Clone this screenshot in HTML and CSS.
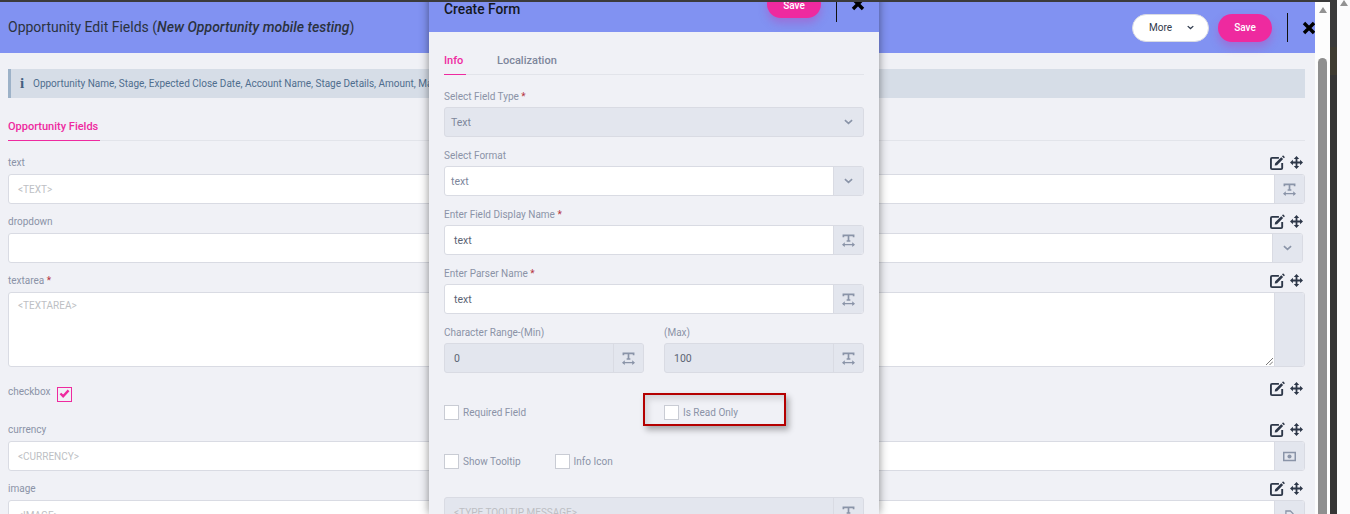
FILE: index.html
```html
<!DOCTYPE html>
<html lang="en">
<head>
    <meta charset="UTF-8">
    <title>Opportunity Edit Fields</title>
    <link rel="stylesheet" href="styles.css">
</head>
<body>
<svg class="defs" width="0" height="0">
    <symbol id="i-edit" viewBox="0 0 16 16">
        <path d="M9.500 3H2.200C1.500 3 1 3.500 1 4.200v9.600c0 .7.500 1.200 1.200 1.200h9.600c.7 0 1.200-.5 1.200-1.200V8.500" fill="none" stroke="currentColor" stroke-width="2"/>
        <path d="M5.500 8.800 12 2.300l2 2-6.500 6.500-2.500.5zM12.800 1.500l.7-.7c.3-.3.7-.3 1 0l1 1c.3.3.3.7 0 1l-.7.7z" fill="currentColor"/>
    </symbol>
    <symbol id="i-move" viewBox="0 0 16 16">
        <path d="M8 0 11.300 3.600H9.100V6.900H12.400V4.700L16 8l-3.600 3.300V9.100H9.100V12.400H11.300L8 16l-3.300-3.600H6.900V9.100H3.600V11.300L0 8l3.600-3.300V6.900H6.900V3.600H4.700z" fill="currentColor"/>
    </symbol>
    <symbol id="i-width" viewBox="0 0 14 14">
        <path d="M1.500 3.500V1.500h11v2M7 1.500V7.500M5 7.500h4" fill="none" stroke="currentColor" stroke-width="1.800"/>
        <path d="M1 11.500h12" stroke="currentColor" stroke-width="1.200"/>
        <path d="M0 11.500 3 9v5zM14 11.500 11 9v5z" fill="currentColor"/>
    </symbol>
    <symbol id="i-chevron" viewBox="0 0 10 6">
        <path d="M1 1l4 3.500L9 1" fill="none" stroke="currentColor" stroke-width="1.800"/>
    </symbol>
    <symbol id="i-money" viewBox="0 0 14 10">
        <path d="M.8.800h12.400v8.400H.8z" fill="none" stroke="currentColor" stroke-width="1.600"/>
        <circle cx="7" cy="5" r="2.200" fill="currentColor"/>
    </symbol>
    <symbol id="i-file" viewBox="0 0 10 12">
        <path d="M1 1h5l3 3v7H1z" fill="none" stroke="currentColor" stroke-width="1.400"/>
        <path d="M3 6h4v3H3z" fill="currentColor"/>
    </symbol>
    <symbol id="i-times" viewBox="0 0 14 14">
        <path d="M2 2l10 10M12 2 2 12" fill="none" stroke="currentColor" stroke-width="3.400"/>
    </symbol>
</svg>

<div class="screen">
    <div class="app">
        <div class="topBar"></div>
        <div class="appBody">
            <div class="panel">
                <div class="head">
                    <div class="headTitle">Opportunity Edit Fields (<em>New Opportunity mobile testing</em>)</div>
                    <div class="headBtns">
                        <a class="btnMore" href="javascript:;">More <svg class="moreArrow"><use href="#i-chevron"/></svg></a>
                        <a class="btnSave" href="javascript:;">Save</a>
                        <span class="sep"></span>
                        <svg class="closeIcon"><use href="#i-times"/></svg>
                    </div>
                </div>
                <div class="panelBody">
                    <div class="alert">
                        <span class="alertIcon">i</span>
                        <span>Opportunity Name, Stage, Expected Close Date, Account Name, Stage Details, Amount, Mandatory</span>
                    </div>
                    <div class="tabs">
                        <a class="tab on" href="javascript:;">Opportunity Fields</a>
                    </div>

                    <div class="field">
                        <div class="fieldHead">
                            <span class="label">text</span>
                            <span class="tools"><svg class="tool"><use href="#i-edit"/></svg><svg class="toolMove"><use href="#i-move"/></svg></span>
                        </div>
                        <div class="control">
                            <div class="ctrlText ph">&lt;TEXT&gt;</div>
                            <div class="addon"><svg class="addonIcon"><use href="#i-width"/></svg></div>
                        </div>
                    </div>
                    <div class="field">
                        <div class="fieldHead">
                            <span class="label">dropdown</span>
                            <span class="tools"><svg class="tool"><use href="#i-edit"/></svg><svg class="toolMove"><use href="#i-move"/></svg></span>
                        </div>
                        <div class="control short">
                            <div class="ctrlText"></div>
                            <div class="addon"><svg class="chevron"><use href="#i-chevron"/></svg></div>
                        </div>
                    </div>
                    <div class="field">
                        <div class="fieldHead">
                            <span class="label">textarea <b class="req">*</b></span>
                            <span class="tools"><svg class="tool"><use href="#i-edit"/></svg><svg class="toolMove"><use href="#i-move"/></svg></span>
                        </div>
                        <div class="control tall">
                            <div class="ctrlText ph">&lt;TEXTAREA&gt;
                                <svg class="grip" viewBox="0 0 8 8"><path d="M0 8 8 0M4 8l4-4" stroke="#666" stroke-width="1"/></svg>
                            </div>
                            <div class="addon"></div>
                        </div>
                    </div>
                    <div class="field checkField">
                        <span class="label">checkbox</span>
                        <span class="checkOn"><svg viewBox="0 0 12 10"><path d="M1.500 5 4.500 8 10.500 1.500" fill="none" stroke="#ee2a9f" stroke-width="2.600"/></svg></span>
                        <span class="tools"><svg class="tool"><use href="#i-edit"/></svg><svg class="toolMove"><use href="#i-move"/></svg></span>
                    </div>
                    <div class="field">
                        <div class="fieldHead">
                            <span class="label">currency</span>
                            <span class="tools"><svg class="tool"><use href="#i-edit"/></svg><svg class="toolMove"><use href="#i-move"/></svg></span>
                        </div>
                        <div class="control">
                            <div class="ctrlText ph">&lt;CURRENCY&gt;</div>
                            <div class="addon"><svg class="addonIcon"><use href="#i-money"/></svg></div>
                        </div>
                    </div>
                    <div class="field">
                        <div class="fieldHead">
                            <span class="label">image</span>
                            <span class="tools"><svg class="tool"><use href="#i-edit"/></svg><svg class="toolMove"><use href="#i-move"/></svg></span>
                        </div>
                        <div class="control">
                            <div class="ctrlText ph">&lt;IMAGE&gt;</div>
                            <div class="addon"><svg class="fileIcon"><use href="#i-file"/></svg></div>
                        </div>
                    </div>
                </div>
            </div>
            <div class="innerScroll">
                <span class="arrowUp"></span>
                <span class="thumb"></span>
            </div>

            <div class="modal">
                <div class="head modalHead">
                    <div class="modalTitle">Create Form</div>
                    <div class="headBtns">
                        <a class="btnSave" href="javascript:;">Save</a>
                        <span class="sep"></span>
                        <svg class="closeIcon"><use href="#i-times"/></svg>
                    </div>
                </div>
                <div class="modalBody">
                    <div class="tabs modalTabs">
                        <a class="tab on" href="javascript:;">Info</a>
                        <a class="tab" href="javascript:;">Localization</a>
                    </div>
                    <div class="field">
                        <div class="fieldHead"><span class="label">Select Field Type <b class="req">*</b></span></div>
                        <div class="control off">
                            <div class="ctrlText">Text</div>
                            <div class="addon plain"><svg class="chevron"><use href="#i-chevron"/></svg></div>
                        </div>
                    </div>
                    <div class="field">
                        <div class="fieldHead"><span class="label">Select Format</span></div>
                        <div class="control">
                            <div class="ctrlText sel">text</div>
                            <div class="addon"><svg class="chevron"><use href="#i-chevron"/></svg></div>
                        </div>
                    </div>
                    <div class="field">
                        <div class="fieldHead"><span class="label">Enter Field Display Name <b class="req">*</b></span></div>
                        <div class="control">
                            <div class="ctrlText dark">text</div>
                            <div class="addon"><svg class="addonIcon"><use href="#i-width"/></svg></div>
                        </div>
                    </div>
                    <div class="field">
                        <div class="fieldHead"><span class="label">Enter Parser Name <b class="req">*</b></span></div>
                        <div class="control">
                            <div class="ctrlText dark">text</div>
                            <div class="addon"><svg class="addonIcon"><use href="#i-width"/></svg></div>
                        </div>
                    </div>
                    <div class="twoCol">
                        <div class="field">
                            <div class="fieldHead"><span class="label">Character Range-(Min)</span></div>
                            <div class="control off">
                                <div class="ctrlText dark">0</div>
                                <div class="addon"><svg class="addonIcon"><use href="#i-width"/></svg></div>
                            </div>
                        </div>
                        <div class="field">
                            <div class="fieldHead"><span class="label">(Max)</span></div>
                            <div class="control off">
                                <div class="ctrlText dark">100</div>
                                <div class="addon"><svg class="addonIcon"><use href="#i-width"/></svg></div>
                            </div>
                        </div>
                    </div>
                    <div class="checkRow twoCol">
                        <label class="check"><span class="box"></span>Required Field</label>
                        <label class="check marked"><span class="box"></span>Is Read Only</label>
                    </div>
                    <div class="checkRow">
                        <label class="check wide"><span class="box"></span>Show Tooltip</label>
                        <label class="check"><span class="box"></span>Info Icon</label>
                    </div>
                    <div class="control off tipInput">
                        <div class="ctrlText ph dark">&lt;TYPE TOOLTIP MESSAGE&gt;</div>
                        <div class="addon"><svg class="addonIcon"><use href="#i-width"/></svg></div>
                    </div>
                </div>
            </div>
        </div>
    </div>
    <div class="gutter"></div>
    <div class="outerScroll"><span class="arrowUp"></span></div>
</div>
</body>
</html>
```

FILE: styles.css
```css
* {
    margin: 0;
    padding: 0;
    box-sizing: border-box;
}

html, body {
    height: 100%;
    overflow: hidden;
}

body {
    font-size: 10px;
    font-family: "Roboto", "Liberation Sans", sans-serif;
    color: #8b93a7;
    background-color: #fbfbfc;
}

a {
    text-decoration: none;
}

.defs {
    position: absolute;
}

.screen {
    display: flex;
    height: 514px;
    overflow: hidden;
}

.app {
    width: 1330px;
    display: flex;
    flex-direction: column;
}

.topBar {
    height: 2px;
    background-color: #3b3b3b;
    position: relative;
    z-index: 5;
}

.appBody {
    flex: 1;
    display: flex;
    position: relative;
    overflow: hidden;
}

.panel {
    width: 1315px;
    flex: none;
    background-color: #f0f1f6;
    overflow: hidden;
}

.panelBody {
    padding: 16px 10px 0 8px;
}

/* scrollbars on the right */
.innerScroll {
    width: 15px;
    display: flex;
    flex-direction: column;
    align-items: center;
    padding-top: 5px;
    background-color: #fdfdfd;
}

.arrowUp {
    display: block;
    width: 0;
    height: 0;
    border-left: 4.500px solid transparent;
    border-right: 4.500px solid transparent;
    border-bottom: 6px solid #929292;
}

.thumb {
    flex: 1;
    width: 9px;
    margin-top: 45px;
    background-color: #8f8f8f;
    border-radius: 5px 5px 0 0;
}

.gutter {
    width: 7px;
    background: linear-gradient(#3a3a3a 47px, #3f3c32 47px, #3f3c32 75px, #363636 75px);
}

.outerScroll {
    flex: 1;
    display: flex;
    flex-direction: column;
    align-items: center;
}

/* header bars */
.head {
    height: 51px;
    display: flex;
    align-items: center;
    justify-content: space-between;
    background-color: #8192f2;
}

.panel > .head {
    padding-left: 8px;
}

.headTitle {
    padding-bottom: 2px;
    font-size: 14px;
    color: #2b3240;
}

.headTitle em {
    font-weight: 500;
}

.headBtns {
    display: flex;
    align-items: center;
}

.btnMore {
    display: flex;
    align-items: center;
    justify-content: space-between;
    width: 77px;
    height: 28px;
    padding: 0 14px 0 16px;
    margin-right: 9px;
    background-color: #fff;
    border: 1px solid #d9dbe3;
    border-radius: 14px;
    font-size: 10px;
    color: #2f3a4c;
}

.moreArrow {
    width: 7px;
    height: 5px;
    color: #2f3a4c;
}

.btnSave {
    width: 54px;
    height: 28px;
    line-height: 28px;
    text-align: center;
    background-color: #ee2a9f;
    border-radius: 14px;
    font-size: 10px;
    font-weight: 500;
    color: #fff;
    box-shadow: 0 5px 9px rgba(200, 50, 170, .35);
}

.sep {
    width: 1px;
    height: 29px;
    margin: 0 8px 0 15px;
    background-color: #111;
}

.closeIcon {
    width: 14px;
    height: 14px;
    margin-left: 6px;
    margin-right: -1px;
    color: #000;
}

/* info box */
.alert {
    display: flex;
    align-items: center;
    height: 29px;
    padding-left: 9px;
    background-color: #d6dde7;
    border-left: 3px solid #9db2c8;
    font-size: 10px;
    color: #4f6d8e;
    white-space: nowrap;
}

.alertIcon {
    width: 11px;
    margin-right: 2px;
    font-family: "Liberation Serif", serif;
    font-size: 15px;
    font-weight: bold;
    color: #44607f;
}

/* tabs */
.tabs {
    display: flex;
    height: 43px;
    align-items: flex-end;
    margin-bottom: 13px;
    border-bottom: 1px solid #e2e4ea;
}

.tab {
    display: block;
    height: 20px;
    font-size: 11px;
    font-weight: 500;
    color: #7d869b;
}

.tab.on {
    color: #ee2a9f;
    border-bottom: 1px solid #ee2a9f;
    margin-bottom: -1px;
    height: 21px;
}

.panel .tab.on {
    width: 92px;
}

.modalTabs {
    margin-bottom: 12px;
}

.modalTabs .tab.on {
    width: 22px;
    margin-right: 31px;
}

/* fields */
.field {
    margin-bottom: 9px;
}

.fieldHead {
    display: flex;
    height: 20px;
    padding-bottom: 4px;
    align-items: center;
    justify-content: space-between;
}

.modal .fieldHead {
    padding-bottom: 2px;
}

.label {
    font-size: 10px;
}

.req {
    font-weight: normal;
    color: #b5343f;
}

.tools {
    display: flex;
    align-items: center;
    gap: 5px;
    padding-right: 2px;
    color: #2d3748;
}

.tool {
    width: 15px;
    height: 15px;
}

.toolMove {
    width: 13px;
    height: 13px;
}

.control {
    display: flex;
    height: 30px;
    background-color: #fff;
    border: 1px solid #d9dbe3;
    border-radius: 3px;
    overflow: hidden;
}

.control.short {
    margin-right: 2px;
}

.control.tall {
    height: 75px;
}

.control.tall .ctrlText {
    padding-top: 6px;
}

.control.off {
    background-color: #e3e6ee;
}

.ctrlText {
    flex: 1;
    position: relative;
    padding: 8px 6px;
    line-height: 13px;
    font-size: 10.500px;
    color: #7d869b;
}

.ctrlText.ph {
    padding-left: 9px;
    font-size: 10px;
    color: #bdbfc4;
}

.ctrlText.dark {
    padding-left: 9px;
    color: #5c6474;
}

.tipInput .ctrlText.dark {
    color: #bdbfc4;
}

.grip {
    position: absolute;
    right: 1px;
    bottom: 1px;
    width: 7px;
    height: 7px;
}

.addon {
    width: 30px;
    display: flex;
    align-items: center;
    justify-content: center;
    background-color: #e3e6ee;
    border-left: 1px solid #d9dbe3;
}

.addon.plain {
    border-left: 0;
}

.addonIcon {
    width: 13px;
    height: 13px;
    color: #8a94a8;
}

.chevron {
    width: 9px;
    height: 6px;
    color: #8a94a8;
}

.fileIcon {
    width: 9px;
    height: 11px;
    color: #8a94a8;
}

.checkField {
    display: flex;
    align-items: center;
    height: 36px;
}

.checkOn {
    width: 15px;
    height: 15px;
    margin-left: 6px;
    padding: 1px;
    border: 1px solid #ee2a9f;
}

.checkOn svg {
    display: block;
    width: 11px;
    height: 9px;
}

.checkField .tools {
    margin-left: auto;
    margin-top: -12px;
}

.checkField .label {
    margin-top: -6px;
}

/* modal, sits over the panel */
.modal {
    position: absolute;
    top: -21px;
    left: 429px;
    bottom: 0;
    width: 450px;
    background-color: #f0f1f6;
    box-shadow: 0 0 9px rgba(0, 0, 0, .45);
}

.modalHead {
    padding: 0 15px;
}

.modalHead .btnSave {
    margin-top: -5px;
    line-height: 31px;
}

.modalHead .closeIcon {
    margin-top: -5px;
}

.modalHead .sep {
    margin-top: 1px;
}

.modalTitle {
    margin-top: 4px;
    font-size: 13.800px;
    font-weight: 500;
    color: #14181f;
}

.modalBody {
    padding: 0 15px;
}

.twoCol {
    display: grid;
    grid-template-columns: 200px 200px;
    column-gap: 20px;
}

.checkRow {
    display: flex;
    align-items: center;
    height: 49px;
}

.checkRow.twoCol {
    display: grid;
    margin-top: 6px;
}

.check {
    position: relative;
    display: flex;
    align-items: center;
    font-size: 10px;
}

.check.wide {
    margin-right: 34px;
}

.box {
    width: 15px;
    height: 15px;
    margin-right: 4px;
    background-color: #fff;
    border: 1px solid #c9ccd4;
}

/* red note drawn round the checkbox */
.check.marked::after {
    content: "";
    box-sizing: border-box;
    position: absolute;
    left: -21px;
    top: -12px;
    width: 143px;
    height: 33px;
    border: 2px solid #b40000;
    box-shadow: 3px 4px 6px rgba(0, 0, 0, .3), inset 3px 4px 6px rgba(0, 0, 0, .12);
}

.tipInput {
    margin-top: 11px;
}
```
